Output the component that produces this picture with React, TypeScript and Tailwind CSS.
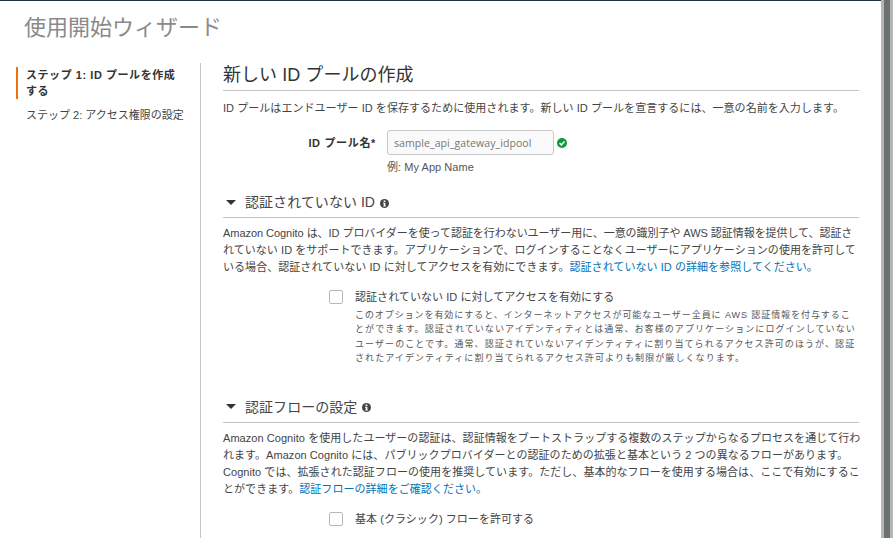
import React from "react";

const font = { fontFamily: '"Liberation Sans","Noto Sans CJK JP",sans-serif' };

function Info() {
  return (
    <svg width="9" height="9" viewBox="0 0 10 10" className="ml-[5px] mt-[2px] shrink-0">
      <circle cx="5" cy="5" r="5" fill="#444" />
      <rect x="4" y="1.6" width="2" height="1.7" fill="#fff" />
      <path d="M3.4 4.2h2.6v3.2h.8v1H3.4v-1h.8V5.2h-.8z" fill="#fff" />
    </svg>
  );
}

function SectionHeader({ title }: { title: string }) {
  return (
    <div className="flex items-center h-[29px] border-b border-[#c4c4c4] pb-[2px]">
      <svg width="10" height="5" viewBox="0 0 10 5" className="ml-[3px] mr-[9px]">
        <path d="M0 0h10L5 5z" fill="#333" />
      </svg>
      <h3 className="text-[14px] text-[#444] font-normal leading-[20px]">{title}</h3>
      <Info />
    </div>
  );
}

function Box() {
  return <div className="w-[14px] h-[14px] rounded-[2px] border border-[#b8b8b8] bg-white shrink-0 mt-[1px]" />;
}

export default function App() {
  return (
    <div className="w-[893px] h-[538px] overflow-hidden flex bg-white text-[#444]" style={font}>
      <div className="w-[881px] shrink-0 flex flex-col">
        <div className="h-px bg-[#232f3e] shrink-0" />
        <h1 className="text-[22px] leading-[30px] font-normal text-[#8a8a8a] pl-[24px] pt-[12px] h-[62px] shrink-0">使用開始ウィザード</h1>
        <div className="flex flex-1 min-h-0">
          <nav className="w-[200px] shrink-0 pl-[16px] pt-[4px] text-[11px] leading-[16px]">
            <div className="border-l-[2px] border-[#ec7211] pl-[8px] pr-[20px] font-bold tracking-[0.05em] text-[#333] h-[32px]">ステップ 1: ID プールを作成する</div>
            <div className="pl-[10px] mt-[8px] text-[#444]">ステップ 2: アクセス権限の設定</div>
          </nav>
          <main className="w-[659px] border-l border-[#c4c4c4] pl-[22px] pr-0 text-[11px] leading-[17px] tracking-[0.05px]">
            <div className="h-[28px] border-b border-[#c4c4c4]">
              <h2 className="text-[18px] leading-[24px] font-normal text-[#333]">新しい ID プールの作成</h2>
            </div>
            <p className="mt-[9px] whitespace-nowrap">ID プールはエンドユーザー ID を保存するために使用されます。新しい ID プールを宣言するには、一意の名前を入力します。</p>
            <div className="flex mt-[13px]">
              <label className="w-[153px] text-right font-bold tracking-[0.06em] text-[#333] pt-[5px]">ID プール名*</label>
              <div className="ml-[11px]">
                <div className="flex items-center">
                  <div className="w-[167px] h-[25px] border border-[#c8c8c8] rounded-[3px] bg-[#fafafa] pl-[6px] text-[10.5px] tracking-[0.08px] leading-[24px] text-[#777]" style={{ fontFamily: '"Open Sans",sans-serif' }}>sample_api_gateway_idpool</div>
                  <svg width="10" height="10" viewBox="0 0 10 10" className="ml-[3px]">
                    <circle cx="5" cy="5" r="5" fill="#0a9a37" />
                    <path d="M2.6 5.1 4.4 6.9 7.5 3.6" stroke="#fff" strokeWidth="1.5" fill="none" />
                  </svg>
                </div>
                <p className="mt-[4px] text-[#555]">例: My App Name</p>
              </div>
            </div>
            <div className="mt-[13px]"><SectionHeader title="認証されていない ID" /></div>
            <p className="mt-[7px] whitespace-nowrap"><span className="tracking-[-0.05px]">Amazon Cognito は、ID プロバイダーを使って認証を行わないユーザー用に、一意の識別子や AWS 認証情報を提供して、認証さ</span><br />れていない ID をサポートできます。アプリケーションで、ログインすることなくユーザーにアプリケーションの使用を許可して<br />いる場合、認証されていない ID に対してアクセスを有効にできます。<a className="text-[#0073bb]">認証されていない ID の詳細を参照してください</a>。</p>
            <div className="flex mt-[13px] pl-[106px]">
              <Box />
              <div className="ml-[12px]">
                <div>認証されていない ID に対してアクセスを有効にする</div>
                <p className="text-[9px] leading-[14.4px] tracking-[1.08px] mt-[2px] text-[#555] whitespace-nowrap"><span className="tracking-[0.93px]">このオプションを有効にすると、インターネットアクセスが可能なユーザー全員に AWS 認証情報を付与するこ</span><br />とができます。認証されていないアイデンティティとは通常、お客様のアプリケーションにログインしていない<br />ユーザーのことです。通常、認証されていないアイデンティティに割り当てられるアクセス許可のほうが、認証<br />されたアイデンティティに割り当てられるアクセス許可よりも制限が厳しくなります。</p>
              </div>
            </div>
            <div className="mt-[28px]"><SectionHeader title="認証フローの設定" /></div>
            <p className="mt-[7px] whitespace-nowrap">Amazon Cognito を使用したユーザーの認証は、認証情報をブートストラップする複数のステップからなるプロセスを通じて行わ<br />れます。Amazon Cognito には、パブリックプロバイダーとの認証のための拡張と基本という 2 つの異なるフローがあります。<br />Cognito では、拡張された認証フローの使用を推奨しています。ただし、基本的なフローを使用する場合は、ここで有効にするこ<br />とができます。<a className="text-[#0073bb]">認証フローの詳細をご確認ください。</a></p>
            <div className="flex mt-[13px] pl-[106px]">
              <Box />
              <div className="ml-[12px]">基本 (クラシック) フローを許可する</div>
            </div>
          </main>
        </div>
      </div>
      <div className="w-[3px] bg-[#b4b6b6]" />
      <div className="w-[6px] bg-[#6b7070]" />
      <div className="w-[3px] bg-[#b4b6b6]" />
    </div>
  );
}
